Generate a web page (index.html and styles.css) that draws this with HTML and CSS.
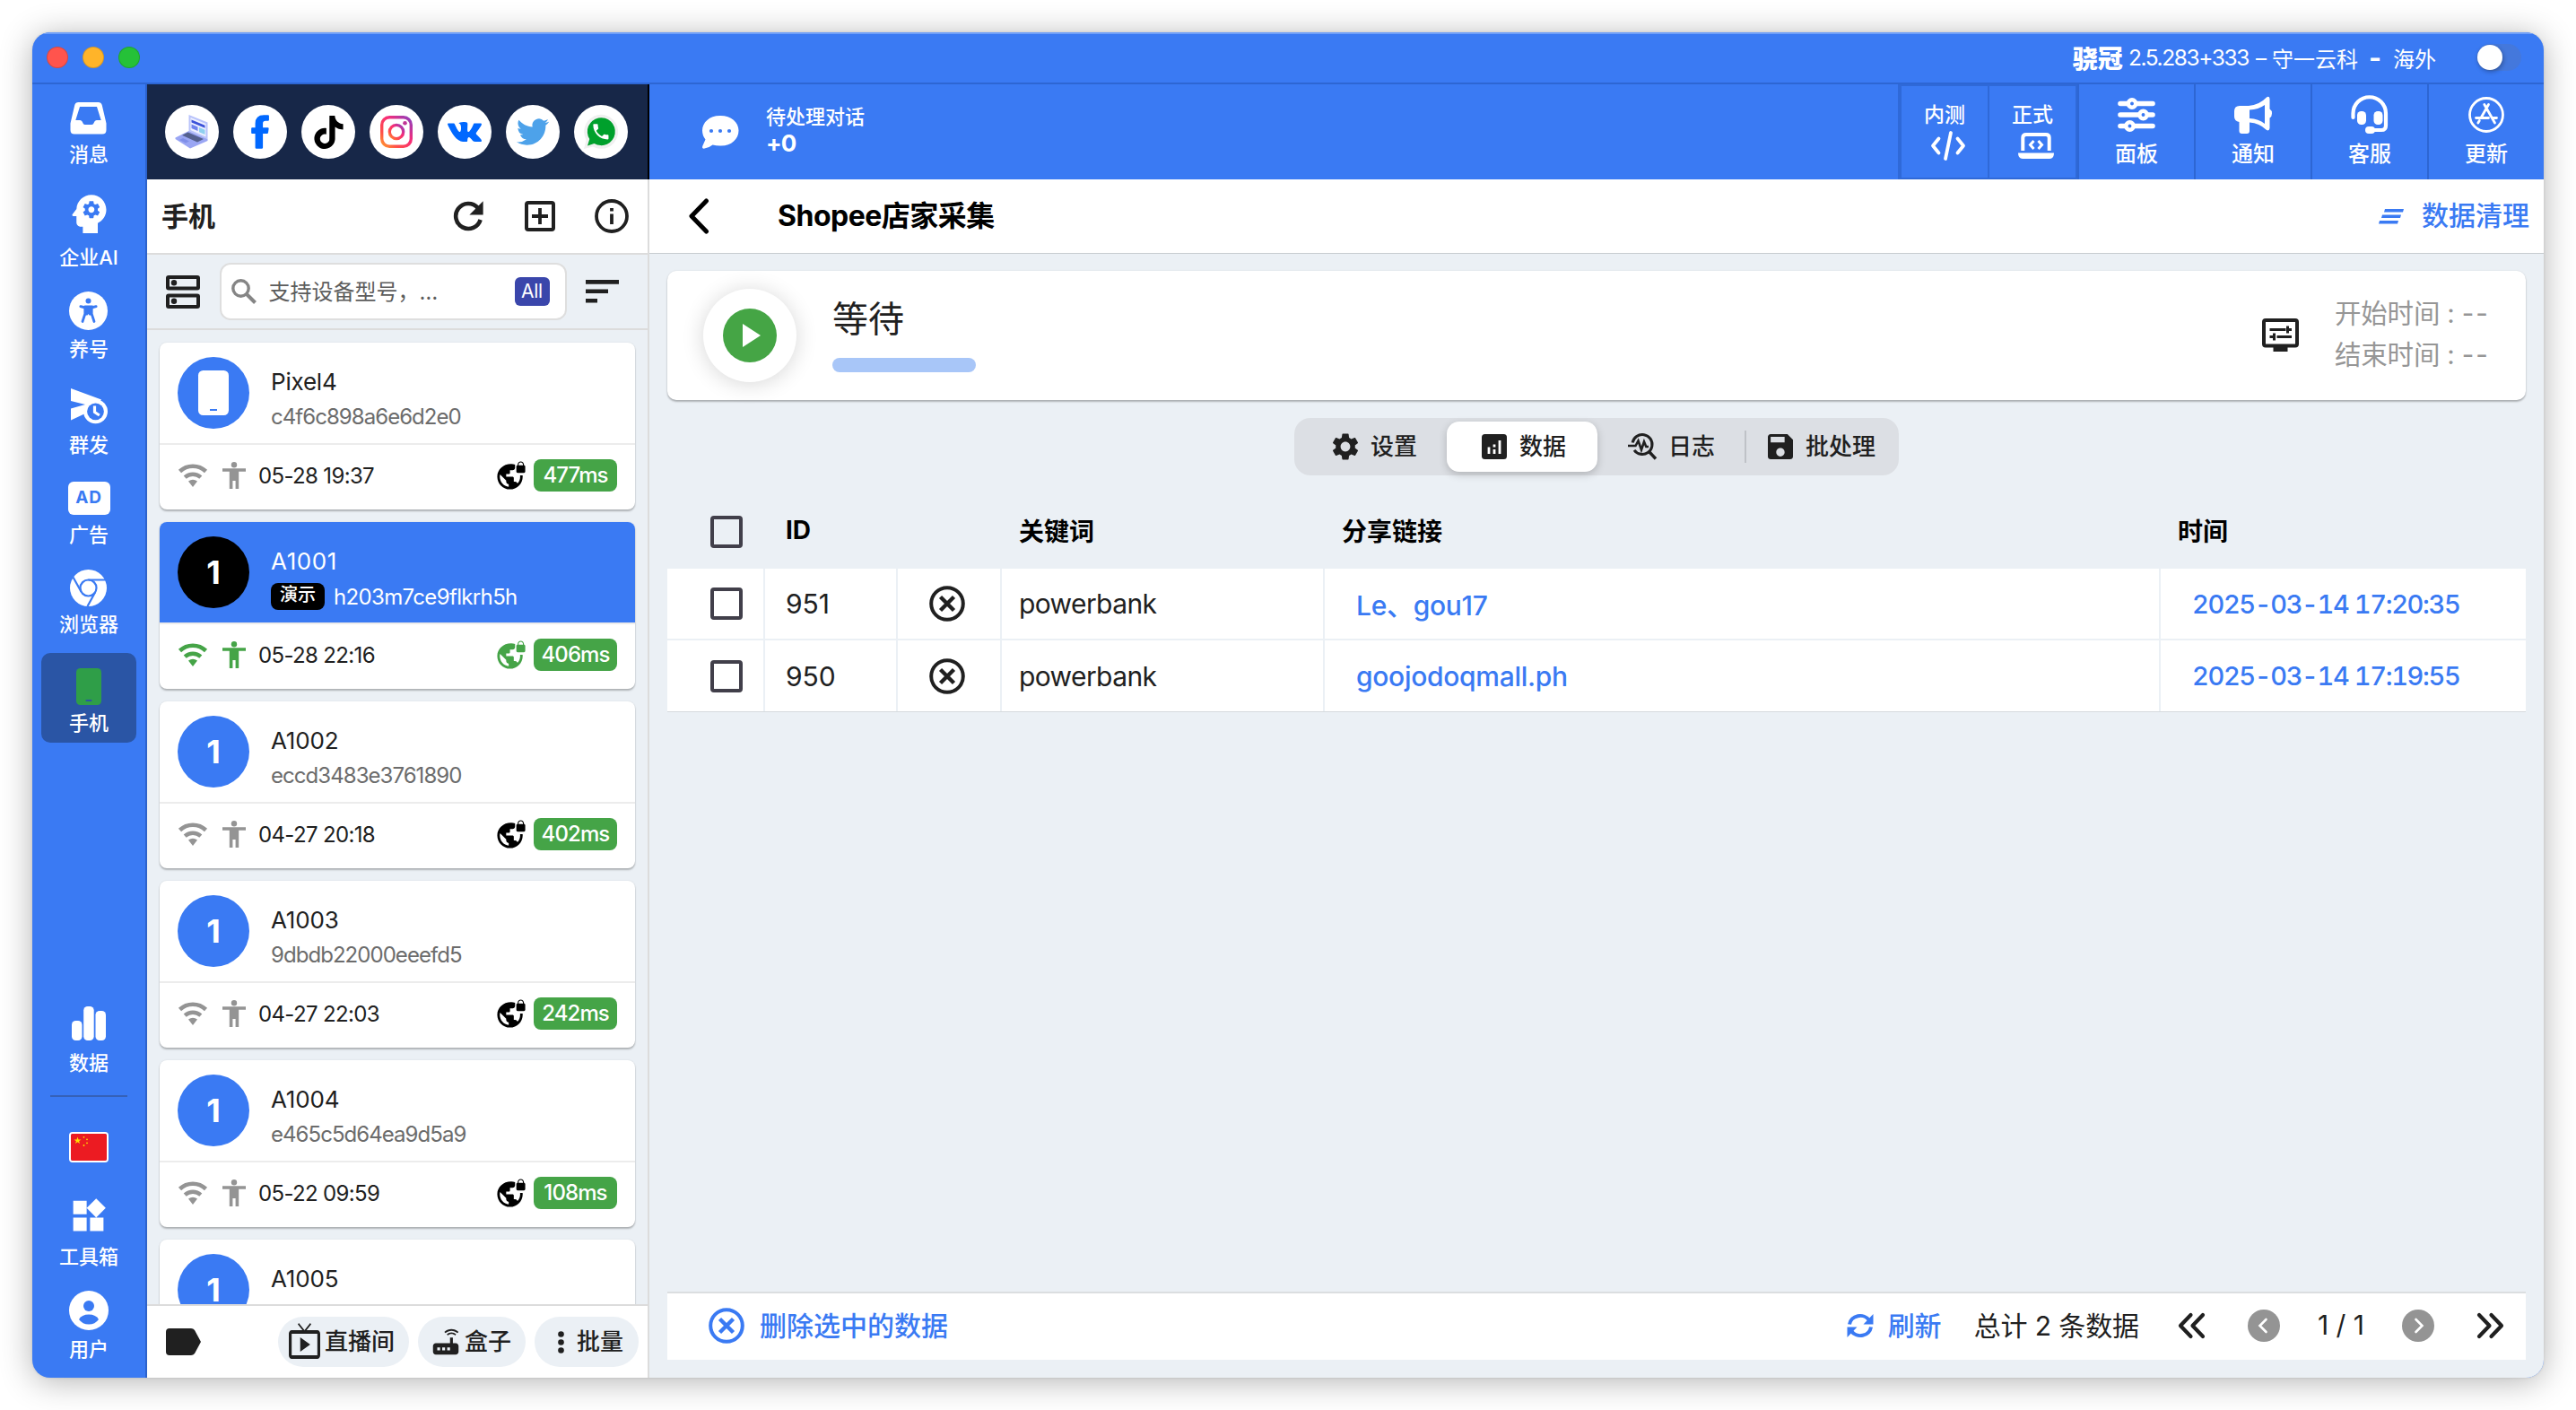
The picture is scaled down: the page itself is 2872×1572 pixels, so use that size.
FILE: index.html
```html
<!DOCTYPE html>
<html lang="zh-CN">
<head>
<meta charset="utf-8">
<title>骁冠</title>
<link rel="stylesheet" href="styles.css">
</head>
<body>
<svg class="defs" width="0" height="0">
  <defs>
    <symbol id="wifi" viewBox="0 0 34 30"><path d="M2.5 10.5a21 21 0 0 1 29 0" fill="none" stroke="currentColor" stroke-width="4.6"/><path d="M8.2 17.2a13 13 0 0 1 17.6 0" fill="none" stroke="currentColor" stroke-width="4.4"/><path d="M12 21.5q5-3.4 10 0L17 28z" fill="currentColor"/></symbol>
    <symbol id="man" viewBox="0 0 28 30"><circle cx="14" cy="3.2" r="3.2" fill="currentColor"/><path d="M1 7.200h26v3.600h-7.800V30h-3.600v-9h-3.200v9H8.800V10.800H1z" fill="currentColor"/></symbol>
    <symbol id="globe" viewBox="0 0 24 24"><path fill="currentColor" d="M22 4v-.5C22 2.120 20.880 1 19.500 1S17 2.120 17 3.500V4c-.55 0-1 .45-1 1v4c0 .55.45 1 1 1h5c.55 0 1-.45 1-1V5c0-.55-.45-1-1-1zm-.8 0h-3.400v-.5c0-.94.76-1.700 1.700-1.700s1.700.76 1.700 1.700V4zm-2.280 8c.04.33.08.66.08 1 0 2.080-.8 3.970-2.100 5.390-.26-.81-1-1.390-1.900-1.390h-1v-3c0-.55-.45-1-1-1H8v-2h2c.55 0 1-.45 1-1V8h2c1.100 0 2-.9 2-2V3.460c-.95-.3-1.950-.46-3-.46C5.480 3 1 7.480 1 13s4.480 10 10 10 10-4.480 10-10c0-.34-.02-.67-.05-1h-2.030zM10 20.930c-3.950-.49-7-3.850-7-7.930 0-.62.08-1.210.21-1.790L8 16v1c0 1.100.9 2 2 2v1.930z"/></symbol>
    <symbol id="xcircle" viewBox="0 0 40 40"><circle cx="20" cy="20" r="17.800" fill="none" stroke="currentColor" stroke-width="4"/><path d="M12.500 12.500l15 15m0-15l-15 15" stroke="currentColor" stroke-width="4.400" fill="none"/></symbol>
    <linearGradient id="ig" x1="0" y1="1" x2="1" y2="0"><stop offset="0" stop-color="#ff9a2e"/><stop offset=".25" stop-color="#ff4f4a"/><stop offset=".6" stop-color="#f72c78"/><stop offset="1" stop-color="#8a3fc0"/></linearGradient>
  </defs>
</svg>

<div class="window">
  <header class="titlebar">
    <div class="lights"><i class="red"></i><i class="yellow"></i><i class="green"></i></div>
    <div class="caption"><b>骁冠</b><span class="version">2.5.283+333</span><span class="dash">–</span><span>守一云科</span><b class="minus">-</b><span>海外</span></div>
    <div class="toggle"><i></i></div>
  </header>

  <div class="body">
    <nav class="sidebar">
      <a class="nav n1"><span class="ic"><svg width="41" height="37" viewBox="0 0 41 37"><path fill="#fff" fill-rule="evenodd" d="M9.500 1h22c2.200 0 3.600 1 4.200 3l4.800 20.500V32q0 4.500-4.500 4.500H5Q.5 36.500.5 32v-7.500L5.300 4C5.900 2 7.300 1 9.500 1zM11 6L6.300 21h5q1.500 0 2.300 1.600l1 2q.8 1.500 2.400 1.500h7q1.600 0 2.400-1.500l1-2Q28.200 21 29.700 21h5L30 6z"/></svg></span><em>消息</em></a>
      <a class="nav n2"><span class="ic"><svg width="57" height="57" viewBox="0 0 24 24"><path fill="#fff" d="M13 8.570c-.79 0-1.430.64-1.430 1.430s.64 1.430 1.430 1.430 1.430-.64 1.430-1.430-.64-1.430-1.430-1.430zM13 3C9.250 3 6.200 5.940 6.020 9.640L4.100 12.200c-.25.33-.01.8.4.8H6v3c0 1.100.9 2 2 2h1v3h7v-4.680c2.360-1.120 4-3.530 4-6.320 0-3.870-3.130-7-7-7zm3 7c0 .13-.01.26-.02.39l.83.66c.08.06.1.16.05.25l-.8 1.390c-.05.09-.16.12-.24.09l-.99-.4c-.21.16-.43.29-.67.39L14 13.830c-.01.1-.1.17-.2.17h-1.600c-.1 0-.18-.07-.2-.17l-.15-1.060c-.25-.1-.47-.23-.68-.39l-.99.4c-.09.03-.2 0-.25-.09l-.8-1.390c-.05-.08-.03-.19.05-.25l.84-.66c-.01-.13-.02-.26-.02-.39s.02-.27.04-.39l-.85-.66c-.08-.06-.1-.16-.05-.26l.8-1.380c.05-.09.15-.12.24-.09l1 .4c.2-.15.43-.29.67-.39L12 6.170c.02-.1.1-.17.2-.17h1.600c.1 0 .18.07.2.17l.15 1.060c.24.1.46.23.67.39l1-.4c.09-.03.2 0 .24.09l.8 1.380c.05.09.03.2-.05.26l-.85.66c.03.12.04.25.04.39z"/></svg></span><em>企业AI</em></a>
      <a class="nav n3"><span class="ic"><svg width="43" height="43" viewBox="0 0 43 43"><circle cx="21.500" cy="21.500" r="21.500" fill="#fff"/><circle cx="21.500" cy="10.500" r="3" fill="#3a7af3"/><path d="M12.800 16.600q8.700 3 17.400 0" stroke="#3a7af3" stroke-width="2.800" stroke-linecap="round" fill="none"/><path d="M17.800 17h7.400v8l2.800 8.500M17.800 17v8L15 33.500" stroke="#3a7af3" stroke-width="2.800" stroke-linecap="round" fill="none"/><path d="M17 17h9v9.500h-3.500l-1-1.500-1 1.500H17z" fill="#3a7af3"/></svg></span><em>养号</em></a>
      <a class="nav n4"><span class="ic"><svg width="42" height="40" viewBox="0 0 42 40"><path fill="#fff" d="M1 0l34 12.500-8 12-11 4L1 35.500v-13L17 18 1 14z"/><circle cx="28.500" cy="25.800" r="13.500" fill="#fff"/><circle cx="28.500" cy="25.800" r="9.400" fill="#3a7af3"/><path d="M27.500 19.500v7l5.300 3.500" stroke="#fff" stroke-width="3.200" fill="none"/></svg></span><em>群发</em></a>
      <a class="nav n5"><span class="ic"><span class="ad">AD</span></span><em>广告</em></a>
      <a class="nav n6"><span class="ic"><svg width="41" height="41" viewBox="0 0 41 41"><circle cx="20.500" cy="20.500" r="20.500" fill="#fff"/><g fill="none" stroke="#3a7af3" stroke-width="2.200"><circle cx="20.500" cy="20.500" r="9"/><path d="M20.500 11.500H40M12.700 25L3.500 8.500M28.300 25L19.500 41"/></g></svg></span><em>浏览器</em></a>
      <a class="nav n7 active"><span class="ic"><svg width="28" height="41" viewBox="0 0 28 41"><rect width="28" height="41" rx="4.500" fill="#2f9e48"/><rect x="10.500" y="35" width="7" height="2" rx="1" fill="#2a55a5"/></svg></span><em>手机</em></a>
      <a class="nav n8"><span class="ic"><svg width="38" height="38" viewBox="0 0 38 38" fill="#fff"><rect y="16" width="11.500" height="22" rx="4.500"/><rect x="13.200" width="11.500" height="38" rx="4.500"/><rect x="26.500" y="5" width="11.500" height="33" rx="4.500"/></svg></span><em>数据</em></a>
      <hr>
      <a class="flag"><svg width="40" height="30" viewBox="0 0 40 30"><rect width="40" height="30" fill="#ec1b22"/><g fill="#ffe000"><path d="M7.500 3.500l1 2.900h3l-2.400 1.800.9 2.900-2.500-1.800-2.500 1.800.9-2.900-2.400-1.800h3z"/><circle cx="14.500" cy="3.800" r=".9"/><circle cx="18" cy="6.300" r=".9"/><circle cx="18" cy="10.300" r=".9"/><circle cx="14.500" cy="13" r=".9"/></g></svg></a>
      <a class="nav n9"><span class="ic"><svg width="45" height="45" viewBox="0 0 24 24"><path fill="#fff" d="M13 13v8h8v-8h-8zM3 21h8v-8H3v8zM3 3v8h8V3H3zm13.660-1.310L11 7.340 16.660 13l5.660-5.660-5.660-5.650z"/></svg></span><em>工具箱</em></a>
      <a class="nav n10"><span class="ic"><svg width="44" height="44" viewBox="0 0 44 44"><circle cx="22" cy="22" r="22" fill="#fff"/><circle cx="22" cy="17" r="6" fill="#3a7af3"/><path d="M11 32q3-5.500 11-5.500T33 32q-4 5.500-11 5.500T11 32z" fill="#3a7af3"/></svg></span><em>用户</em></a>
    </nav>

    <section class="devices">
      <div class="social">
        <i><svg width="40" height="40" viewBox="0 0 40 40"><path d="M16.500 1l21 8.500V28l-21-9z" fill="#b9c3fb"/><path d="M18.500 4l17 7v14.500l-17-7.500z" fill="#eef1ff"/><path d="M19.500 6.500l15 6.200v3l-15-6.200z" fill="#3b52d9"/><path d="M19.500 11.500l7 3v4.500l-7-3z" fill="#6f83ee"/><path d="M28 15l6.500 2.800V23L28 20.200z" fill="#8fd0f0"/><path d="M16.500 19l21 9v2L18 38.500 1.500 28v-1.500z" fill="#9aa6f4"/><path d="M15.500 20.500L33 28l-7 3.500L9 23.800z" fill="#54608e"/><path d="M10 27l7 3.500-4 2L6 29z" fill="#7f8ee8"/></svg></i>
        <i><svg width="20" height="38" viewBox="22 4 258 508" preserveAspectRatio="none"><path fill="#0068ff" d="M279 18v62q0 14-14 14h-36q-38 0-38 36v66h70q16 0 14 14l-8 62q-2 14-16 14h-60v206q0 18-18 18H99q-18 0-18-18V286H36q-12 0-12-14v-62q0-14 12-14h45v-62Q81 6 205 6h60q14 0 14 12z"/></svg></i>
        <i><svg width="37" height="37" viewBox="0 0 24 24"><path d="M12.525.02c1.310-.02 2.610-.01 3.910-.02.08 1.530.63 3.090 1.750 4.170 1.120 1.110 2.700 1.620 4.240 1.790v4.030c-1.440-.05-2.890-.35-4.200-.97-.57-.26-1.100-.59-1.620-.93-.01 2.920.01 5.840-.02 8.750-.08 1.400-.54 2.790-1.350 3.940-1.310 1.920-3.580 3.170-5.910 3.210-1.430.08-2.860-.31-4.080-1.030-2.020-1.190-3.440-3.370-3.650-5.710-.02-.5-.03-1-.01-1.490.18-1.900 1.120-3.720 2.580-4.960 1.660-1.440 3.980-2.130 6.150-1.720.02 1.480-.04 2.960-.04 4.440-.99-.32-2.150-.23-3.020.37-.63.41-1.110 1.040-1.360 1.750-.21.51-.15 1.070-.14 1.610.24 1.640 1.820 3.020 3.500 2.870 1.120-.01 2.190-.66 2.770-1.610.19-.33.4-.67.41-1.060.1-1.790.06-3.570.07-5.360.01-4.030-.01-8.050.02-12.070z"/></svg></i>
        <i><svg width="36" height="36" viewBox="0 0 36 36"><g fill="none" stroke="url(#ig)"><rect x="1.700" y="1.700" width="32.600" height="32.600" rx="8.500" stroke-width="3.400"/><circle cx="18" cy="18" r="7.700" stroke-width="3.300"/></g><circle cx="27.500" cy="8.300" r="2.300" fill="#c03596"/></svg></i>
        <i><svg width="38" height="38" viewBox="0 0 24 24"><path fill="#0068ff" d="M13.162 18.994c.609 0 .858-.406.851-.915-.031-1.917.714-2.949 2.059-1.604 1.488 1.488 1.796 2.519 3.603 2.519h3.200c.808 0 1.126-.26 1.126-.668 0-.863-1.421-2.386-2.625-3.504-1.686-1.565-1.765-1.602-.313-3.486 1.801-2.339 4.157-5.336 2.073-5.336h-3.981c-.772 0-.828.435-1.103 1.083-.995 2.347-2.886 5.387-3.604 4.922-.751-.485-.407-2.406-.35-5.261.015-.754.011-1.271-1.141-1.539-.629-.145-1.241-.205-1.809-.205-2.273 0-3.841.953-2.950 1.119 1.571.293 1.420 3.692 1.054 5.160-.638 2.556-3.036-2.024-4.035-4.305-.241-.548-.315-.974-1.175-.974H.787C.295 6 0 6.160 0 6.516c0 .602 2.960 6.720 5.786 9.770 2.756 2.975 5.480 2.708 7.376 2.708z"/></svg></i>
        <i><svg width="36" height="36" viewBox="0 0 24 24"><path fill="#4da2ea" d="M23.953 4.570a10 10 0 01-2.825.775 4.958 4.958 0 002.163-2.723c-.951.555-2.005.959-3.127 1.184a4.920 4.920 0 00-8.384 4.482C7.690 8.095 4.067 6.130 1.640 3.162a4.822 4.822 0 00-.666 2.475c0 1.710.87 3.213 2.188 4.096a4.904 4.904 0 01-2.228-.616v.06a4.923 4.923 0 003.946 4.827 4.996 4.996 0 01-2.212.085 4.936 4.936 0 004.604 3.417 9.867 9.867 0 01-6.102 2.105c-.39 0-.779-.023-1.170-.067a13.995 13.995 0 007.557 2.209c9.053 0 13.998-7.496 13.998-13.985 0-.21 0-.42-.015-.63A9.935 9.935 0 0024 4.590z"/></svg></i>
        <i><svg width="38" height="38" viewBox="0 0 38 38"><path d="M0 38l2.500-10A19 19 0 1 1 10 35.500z" fill="#f0f0f0"/><path d="M4 34.500L6.300 27A15.500 15.500 0 1 1 11.500 32z" fill="#00a02c"/><path d="M6.620 10.790c1.440 2.830 3.760 5.140 6.590 6.590l2.200-2.200c.27-.27.67-.36 1.020-.24 1.120.37 2.330.57 3.570.57.55 0 1 .45 1 1V20c0 .55-.45 1-1 1-9.390 0-17-7.610-17-17 0-.55.45-1 1-1h3.500c.55 0 1 .45 1 1 0 1.250.2 2.450.57 3.570.11.35.03.74-.25 1.020l-2.200 2.200z" fill="#fff" transform="translate(7.500 7.500) scale(.95)"/></svg></i>
      </div>

      <div class="panel-head">
        <h2>手机</h2>
        <svg width="48" height="48" viewBox="0 0 24 24"><path d="M17.300 7.300A7 7 0 1 0 18.800 14" fill="none" stroke="#202020" stroke-width="2.300"/><path d="M20.300 3.600v7.600h-7.600z" fill="#202020"/></svg>
        <svg width="34" height="34" viewBox="0 0 34 34"><rect x="2" y="2" width="30" height="30" rx="2" fill="none" stroke="#202020" stroke-width="4"/><path d="M17 8v18M8 17h18" stroke="#202020" stroke-width="3.800"/></svg>
        <svg width="38" height="38" viewBox="0 0 38 38"><circle cx="19" cy="19" r="17" fill="none" stroke="#202020" stroke-width="3.800"/><path d="M19 16.500V28M19 10v3.600" stroke="#202020" stroke-width="3.800"/></svg>
      </div>

      <div class="search-row">
        <svg width="38" height="37" viewBox="0 0 38 37"><g fill="none" stroke="#202020" stroke-width="4"><rect x="2" y="2" width="34" height="12.500" rx="1"/><rect x="2" y="22.500" width="34" height="12.500" rx="1"/></g><circle cx="9" cy="8.300" r="3.200" fill="#202020"/><circle cx="9" cy="28.700" r="3.200" fill="#202020"/></svg>
        <div class="search"><svg width="28" height="28" viewBox="0 0 28 28"><circle cx="10.500" cy="10.500" r="8.700" fill="none" stroke="#858585" stroke-width="3.400"/><path d="M16.500 16.500L26.500 26.500" stroke="#858585" stroke-width="4"/></svg><span>支持设备型号，…</span><b>All</b></div>
        <svg width="37" height="26" viewBox="0 0 37 26"><path d="M0 2.400h37M0 12.800h25M0 23.200h13" stroke="#202020" stroke-width="4.600"/></svg>
      </div>

      <div class="list">
        <article class="card">
          <div class="top"><div class="avatar"><svg width="34" height="50" viewBox="0 0 34 50"><rect width="34" height="50" rx="5.500" fill="#fff"/><rect x="13" y="43" width="8" height="2" fill="#3a7af3"/></svg></div><div class="who"><p>Pixel4</p><small>c4f6c898a6e6d2e0</small></div></div>
          <div class="foot"><svg class="wifi"><use href="#wifi"/></svg><svg class="man"><use href="#man"/></svg><time>05-28 19:37</time><svg class="globe"><use href="#globe"/></svg><b class="ms">477ms</b></div>
        </article>
        <article class="card selected">
          <div class="top"><div class="avatar">1</div><div class="who"><p>A1001</p><small><mark>演示</mark>h203m7ce9flkrh5h</small></div></div>
          <div class="foot"><svg class="wifi"><use href="#wifi"/></svg><svg class="man"><use href="#man"/></svg><time>05-28 22:16</time><svg class="globe"><use href="#globe"/></svg><b class="ms">406ms</b></div>
        </article>
        <article class="card">
          <div class="top"><div class="avatar">1</div><div class="who"><p>A1002</p><small>eccd3483e3761890</small></div></div>
          <div class="foot"><svg class="wifi"><use href="#wifi"/></svg><svg class="man"><use href="#man"/></svg><time>04-27 20:18</time><svg class="globe"><use href="#globe"/></svg><b class="ms">402ms</b></div>
        </article>
        <article class="card">
          <div class="top"><div class="avatar">1</div><div class="who"><p>A1003</p><small>9dbdb22000eeefd5</small></div></div>
          <div class="foot"><svg class="wifi"><use href="#wifi"/></svg><svg class="man"><use href="#man"/></svg><time>04-27 22:03</time><svg class="globe"><use href="#globe"/></svg><b class="ms">242ms</b></div>
        </article>
        <article class="card">
          <div class="top"><div class="avatar">1</div><div class="who"><p>A1004</p><small>e465c5d64ea9d5a9</small></div></div>
          <div class="foot"><svg class="wifi"><use href="#wifi"/></svg><svg class="man"><use href="#man"/></svg><time>05-22 09:59</time><svg class="globe"><use href="#globe"/></svg><b class="ms">108ms</b></div>
        </article>
        <article class="card">
          <div class="top"><div class="avatar">1</div><div class="who"><p>A1005</p></div></div>
        </article>
      </div>

      <div class="bulk">
        <svg width="39" height="30" viewBox="0 0 39 30"><path d="M4 0h24q2.500 0 4 2l7 13-7 13q-1.500 2-4 2H4q-4 0-4-4V4q0-4 4-4z" fill="#202020"/></svg>
        <button class="live"><svg width="35" height="33" viewBox="1 2 22 20" preserveAspectRatio="none"><path fill="#202020" d="M21 6h-7.590l3.290-3.290L16 2l-4 4-4-4-.7.71L10.590 6H3c-1.100 0-2 .89-2 2v12c0 1.100.9 2 2 2h18c1.100 0 2-.9 2-2V8c0-1.110-.9-2-2-2zm0 14H3V8h18v12zM9 10v8l7-4z"/></svg>直播间</button>
        <button class="box"><svg width="38" height="38" viewBox="0 0 24 24"><path fill="#202020" d="M20.200 5.900l.8-.8C19.600 3.700 17.800 3 16 3s-3.600.7-5 2.100l.8.8C13 4.800 14.500 4.200 16 4.200s3 .6 4.200 1.700zm-.9.8c-.9-.9-2.100-1.400-3.300-1.400s-2.400.5-3.300 1.400l.8.8c.7-.7 1.600-1 2.500-1 .9 0 1.800.3 2.500 1l.8-.8zM19 13h-2V9h-2v4H5c-1.100 0-2 .9-2 2v4c0 1.100.9 2 2 2h14c1.100 0 2-.9 2-2v-4c0-1.100-.9-2-2-2zM8 18H6v-2h2v2zm3.500 0h-2v-2h2v2zm3.500 0h-2v-2h2v2z"/></svg>盒子</button>
        <button class="batch"><svg width="7" height="25" viewBox="0 0 7 25" fill="#202020"><circle cx="3.500" cy="3.500" r="3.300"/><circle cx="3.500" cy="12.500" r="3.300"/><circle cx="3.500" cy="21.500" r="3.300"/></svg>批量</button>
      </div>
    </section>

    <main class="main">
      <div class="topbar">
        <svg width="42" height="37" viewBox="0 0 42 37"><path fill="#fff" d="M21.500 0h-1C9 0 1 7.500 1 16.500q0 5.500 3.500 10L1.200 34q-.8 3 2.300 2.600 5.500-1 9-4 4 1 8 1h1.500c11.500 0 19.500-7.500 19.500-17S33 0 21.500 0z"/><g fill="#3a7af3"><circle cx="11" cy="17" r="2.100"/><circle cx="21" cy="17" r="2.100"/><circle cx="31" cy="17" r="2.100"/></g></svg>
        <div class="pending"><span>待处理对话</span><b>+0</b></div>
        <div class="dev">
          <a><span>内测</span><svg width="38" height="33" viewBox="0 0 38 33"><path d="M8.500 8.500L2 16.500l6.500 8M29.500 8.500l6.500 8-6.500 8M22 2l-6 29" fill="none" stroke="#fff" stroke-width="3.800" stroke-linecap="round" stroke-linejoin="round"/></svg></a>
          <a><span>正式</span><svg width="40" height="29" viewBox="0 0 40 29"><path d="M5.300 20V5.500Q5.300 2 9 2h22q3.700 0 3.700 3.500V20" fill="none" stroke="#fff" stroke-width="4"/><path d="M0 22.500h40q0 6.500-5 6.500H5q-5 0-5-6.500z" fill="#fff"/><path d="M17.500 9l-4 4.500 4 4.500M22.500 9l4 4.500-4 4.500" fill="none" stroke="#fff" stroke-width="3"/></svg></a>
        </div>
        <a class="tool"><svg width="42" height="40" viewBox="0 0 42 40"><path d="M3 7.500h36M3 20h36M3 32.500h36" stroke="#fff" stroke-width="5.600" stroke-linecap="round"/><g fill="#3a7af3" stroke="#fff" stroke-width="4.500"><circle cx="16" cy="7.500" r="4.200"/><circle cx="28.500" cy="20" r="4.200"/><circle cx="13.500" cy="32.500" r="4.200"/></g></svg><span>面板</span></a>
        <a class="tool"><svg width="42" height="42" viewBox="0 0 42 42"><path fill="#fff" fill-rule="evenodd" d="M6 11h10Q28 10 36 1.500q3-2 3.500 1.500v11.500q2.500 1.500 2.500 5t-2.500 5V36q-.5 3.500-3.500 2Q28 30 17 29.500V39q0 3-3 3H8.500q-3 0-3-3V29Q0 28 0 23v-6q0-6 6-6zM17 15.500v9.500q10 .5 17 6V10q-7 5-17 5.500z"/></svg><span>通知</span></a>
        <a class="tool"><svg width="42" height="42" viewBox="0 0 42 42"><path d="M2.500 24V19.500a18.200 18.200 0 0 1 36.500 0V33q0 5-5 5H22" fill="none" stroke="#fff" stroke-width="4.200" stroke-linecap="round"/><rect x="7" y="17" width="10" height="15" rx="4.500" fill="#fff"/><rect x="25.500" y="17" width="10" height="15" rx="4.500" fill="#fff"/><rect x="16" y="34" width="11" height="8" rx="4" fill="#fff"/></svg><span>客服</span></a>
        <a class="tool"><svg width="40" height="40" viewBox="0 0 40 40"><circle cx="20" cy="20" r="18.500" fill="none" stroke="#fff" stroke-width="2.800"/><path d="M22.500 8.500L14 23.500M17.800 8.500L29.500 29M8.500 23.500h14M27 23.500h4.500M12.300 26.500L10.800 29" fill="none" stroke="#fff" stroke-width="2.800" stroke-linecap="round"/></svg><span>更新</span></a>
      </div>

      <div class="page-head">
        <svg width="24" height="40" viewBox="0 0 24 40"><path d="M20.500 3L4 20l16.500 17" fill="none" stroke="#000" stroke-width="5" stroke-linecap="round" stroke-linejoin="round"/></svg>
        <h1>Shopee店家采集</h1>
        <a><svg width="28" height="17" viewBox="0 0 28 17"><path d="M7 0h21l-1 3.500H6zM4 6.500h21l-1 3.500H3zM1 13h21l-1 3.500H0z" fill="#3a7af3"/></svg>数据清理</a>
      </div>

      <div class="content">
        <section class="status">
          <div class="play"><i><svg width="20" height="26" viewBox="0 0 20 26"><path d="M0 0l20 13L0 26z" fill="#fff"/></svg></i></div>
          <div class="state"><h3>等待</h3><div class="bar"></div></div>
          <svg class="monitor" width="41" height="37" viewBox="0 0 41 37"><rect x="2" y="2" width="37" height="28.500" rx="2" fill="none" stroke="#202020" stroke-width="4"/><path d="M12.500 31h16v6h-16z" fill="#202020"/><path d="M8.500 12.500h18M28.500 8.500v8M30 12.500h3M16.500 20.500H33M13.500 16.500v8M8.500 20.500h4" stroke="#202020" stroke-width="3"/></svg>
          <div class="times"><p>开始时间 : <span>--</span></p><p>结束时间 : <span>--</span></p></div>
        </section>

        <div class="tabs">
          <a class="t1"><svg width="36" height="36" viewBox="0 0 24 24"><path fill="#202020" d="M19.140 12.940c.04-.3.06-.61.06-.94 0-.32-.02-.64-.07-.94l2.030-1.580c.18-.14.23-.41.12-.61l-1.920-3.320c-.12-.22-.37-.29-.59-.22l-2.390.96c-.5-.38-1.030-.7-1.620-.94l-.36-2.540c-.04-.24-.24-.41-.48-.41h-3.840c-.24 0-.43.17-.47.41l-.36 2.540c-.59.24-1.130.57-1.620.94l-2.390-.96c-.22-.08-.47 0-.59.22L2.740 8.870c-.12.21-.08.47.12.61l2.030 1.580c-.05.3-.09.63-.09.94s.02.64.07.94l-2.030 1.580c-.18.14-.23.41-.12.61l1.920 3.320c.12.22.37.29.59.22l2.390-.96c.5.38 1.030.7 1.620.94l.36 2.540c.05.24.24.41.48.41h3.840c.24 0 .44-.17.47-.41l.36-2.540c.59-.24 1.130-.56 1.620-.94l2.390.96c.22.08.47 0 .59-.22l1.920-3.320c.12-.22.07-.47-.12-.61l-2.010-1.580zM12 15.600c-1.980 0-3.600-1.620-3.600-3.600s1.620-3.600 3.600-3.600 3.600 1.620 3.600 3.600-1.620 3.600-3.600 3.600z"/></svg>设置</a>
          <a class="t2"><svg width="28" height="28" viewBox="0 0 28 28"><rect width="28" height="28" rx="3.500" fill="#202020"/><path d="M8 14.500V22M14 17v5M20 7v15M14 11.500v3" stroke="#fff" stroke-width="2.800"/></svg>数据</a>
          <a class="t3"><svg width="32" height="30" viewBox="0 0 32 30"><circle cx="16" cy="12.500" r="11" fill="none" stroke="#202020" stroke-width="3" stroke-dasharray="60 9.100" transform="rotate(190 16 12.500)"/><path d="M0 14h8.500l3-5.500 3.500 10 3-9 2.300 5.500H23" fill="none" stroke="#202020" stroke-width="2.600"/><path d="M23.500 20.500L31 28.500" stroke="#202020" stroke-width="3.400"/></svg>日志</a>
          <hr>
          <a class="t4"><svg width="28" height="28" viewBox="3 3 18 18"><path fill="#202020" d="M17 3H5c-1.110 0-2 .9-2 2v14c0 1.100.89 2 2 2h14c1.100 0 2-.9 2-2V7l-4-4zm-5 16c-1.660 0-3-1.340-3-3s1.340-3 3-3 3 1.340 3 3-1.340 3-3 3zm3-10H5V5h10v4z"/></svg>批处理</a>
        </div>

        <div class="table">
          <div class="row head"><div class="c-check"><i class="check"></i></div><div>ID</div><div></div><div>关键词</div><div>分享链接</div><div>时间</div></div>
          <div class="row"><div class="c-check"><i class="check"></i></div><div>951</div><div class="c-x"><svg width="40" height="40"><use href="#xcircle"/></svg></div><div class="word">powerbank</div><div class="link">Le、gou17</div><div class="link date">2025-03-14 17:20:35</div></div>
          <div class="row"><div class="c-check"><i class="check"></i></div><div>950</div><div class="c-x"><svg width="40" height="40"><use href="#xcircle"/></svg></div><div class="word">powerbank</div><div class="link">goojodoqmall.ph</div><div class="link date">2025-03-14 17:19:55</div></div>
        </div>

        <footer class="pager">
          <a class="del"><svg width="40" height="40"><use href="#xcircle"/></svg>删除选中的数据</a>
          <a class="reload"><svg width="30" height="28" viewBox="0 0 30 28"><g fill="none" stroke="#3a7af3" stroke-width="4"><path d="M3 12.500A12 11 0 0 1 25 8"/><path d="M27 15.500A12 11 0 0 1 5 20"/></g><path d="M29.500 1v11.500H18.500z" fill="#3a7af3"/><path d="M.5 27V15.500h11z" fill="#3a7af3"/></svg>刷新</a>
          <span class="total">总计 2 条数据</span>
          <svg class="first" width="31" height="28" viewBox="0 0 31 28"><path d="M14.500 2L3 14l11.500 12M28 2L16.500 14 28 26" fill="none" stroke="#202020" stroke-width="4.200" stroke-linecap="round" stroke-linejoin="round"/></svg>
          <svg class="prev" width="36" height="36" viewBox="0 0 36 36"><circle cx="18" cy="18" r="18" fill="#949494"/><path d="M20.500 11L13.500 18l7 7" fill="none" stroke="#fff" stroke-width="2.600" stroke-linecap="round"/></svg>
          <span class="page">1 / 1</span>
          <svg class="next" width="36" height="36" viewBox="0 0 36 36"><circle cx="18" cy="18" r="18" fill="#949494"/><path d="M15.500 11l7 7-7 7" fill="none" stroke="#fff" stroke-width="2.600" stroke-linecap="round"/></svg>
          <svg class="last" width="31" height="28" viewBox="0 0 31 28"><path d="M16.500 2L28 14 16.500 26M3 2l11.500 12L3 26" fill="none" stroke="#202020" stroke-width="4.200" stroke-linecap="round" stroke-linejoin="round"/></svg>
        </footer>
      </div>
    </main>
  </div>
</div>
</body>
</html>
```
FILE: styles.css
```css
* { box-sizing: border-box; margin: 0; padding: 0; }
body { width: 2872px; height: 1572px; padding: 36px; overflow: hidden; background: #fff; color: #202020; font-family: Inter, "Noto Sans CJK SC", sans-serif; }
svg { display: block; flex: none; overflow: visible; }
.defs { position: absolute; }
em, i { font-style: normal; }
hr { border: 0; flex: none; }
a, span, b, time, p, small { white-space: nowrap; }

.window { width: 2800px; height: 1500px; border-radius: 20px; overflow: hidden; background: #3a7af3; display: flex; flex-direction: column; box-shadow: 0 0 3px rgba(0,0,0,.12), 0 4px 36px rgba(0,0,0,.3); }

.titlebar { height: 58px; flex: none; display: flex; align-items: center; padding: 0 25px 0 16px; border-bottom: 2px solid #2d66d3; box-shadow: inset 0 2px 0 #6f9ff8; color: #fff; }
.lights { display: flex; gap: 16px; flex: 1; }
.lights i { width: 24px; height: 24px; border-radius: 50%; border: 1px solid rgba(0,0,0,.15); }
.red { background: #ff544d; } .yellow { background: #ffb429; } .green { background: #25c138; }
.caption { display: flex; align-items: center; font-size: 24px; }
.caption b { font-size: 28px; font-weight: 900; }
.caption .version { margin-left: 6px; letter-spacing: -1.400px; font-size: 24.500px; }
.caption .dash { margin: 0 6px 0 8px; width: 12px; overflow: visible; }
.caption .minus { width: 15px; margin: 0 12px 0 12px; font-weight: 700; font-size: 30px; }
.toggle { width: 50px; height: 30px; border-radius: 15px; background: #4478dc; margin-left: 45px; padding: 1px; }
.toggle i { display: block; width: 28px; height: 28px; border-radius: 50%; background: #fff; box-shadow: 1px 2px 5px rgba(0,0,0,.3); }

.body { flex: 1; min-height: 0; display: flex; }

.sidebar { width: 128px; flex: none; border-right: 2px solid #2c62cc; padding: 17px 0 18px; display: flex; flex-direction: column; align-items: center; color: #fff; }
.nav { display: flex; flex-direction: column; align-items: center; justify-content: space-between; height: 75px; flex: none; }
.nav .ic { height: 40px; display: flex; align-items: center; justify-content: center; }
.nav em { font-size: 22px; line-height: 28px; font-weight: 500; }
.n2 { height: 83px; margin-top: 32px; }
.n3 { height: 77px; margin-top: 25px; }
.n4 { height: 77px; margin-top: 30px; }
.n5, .n6 { margin-top: 25px; }
.n7 { width: 106px; height: 100px; margin-top: 18px; padding: 17px 0 8px; border-radius: 10px; background: #2a55a5; }
.n8 { height: 78px; margin-top: auto; }
.n9 { height: 80px; margin-top: 39px; }
.n10 { height: 77px; margin-top: 26px; }
.sidebar hr { width: 86px; height: 2px; margin-top: 22px; background: #3561b8; }
.flag { margin-top: 39px; border: 2px solid #fff; border-radius: 4px; overflow: hidden; }
.ad { width: 47px; height: 37px; border-radius: 6px; background: #fff; color: #3a7af3; font-size: 19px; letter-spacing: .8px; font-weight: 700; line-height: 36px; text-align: center; }

.devices { width: 560px; flex: none; border-right: 2px solid #dcdcdc; background: #ebf0f5; display: flex; flex-direction: column; }
.social { height: 106px; width: 560px; flex: none; background: #172748; border-right: 2px solid #000; display: flex; align-items: center; gap: 16px; padding-left: 20px; position: relative; }
.social i { width: 60px; height: 60px; border-radius: 50%; background: #fff; display: flex; align-items: center; justify-content: center; flex: none; }
.panel-head { height: 84px; flex: none; background: #fff; border-bottom: 2px solid #dcdcdc; display: flex; align-items: center; padding: 0 21px 0 16px; }
.panel-head h2 { flex: 1; font-size: 30px; font-weight: 700; padding-bottom: 5px; }
.panel-head svg + svg { margin-left: 39px; }
.panel-head svg:last-child { margin-left: 44px; }
.search-row { height: 84px; flex: none; border-bottom: 2px solid #dcdcdc; display: flex; align-items: center; padding: 0 32px 0 21px; justify-content: space-between; }
.search { width: 387px; height: 64px; border: 2px solid #dedede; border-radius: 12px; background: #fff; display: flex; align-items: center; padding: 0 17px 0 11px; font-size: 24px; color: #5c5c5c; }
.search span { flex: 1; margin-left: 14px; padding-bottom: 3px; }
.search b { width: 39px; height: 32px; border-radius: 6px; background: #3a46ab; color: #fff; font-size: 21px; font-weight: 400; line-height: 32px; text-align: center; letter-spacing: -.3px; }

.list { flex: 1; min-height: 0; overflow: hidden; padding: 14px 14px 0; display: flex; flex-direction: column; gap: 14px; }
.card { height: 186px; flex: none; border-radius: 8px; background: #fff; box-shadow: 0 2px 2px rgba(0,0,0,.25), 0 0 2px rgba(0,0,0,.1); overflow: hidden; }
.top { height: 114px; border-bottom: 2px solid #ececec; display: flex; padding: 16px 20px; }
.avatar { width: 80px; height: 80px; border-radius: 50%; background: #3a7af3; color: #fff; display: flex; align-items: center; justify-content: center; font-size: 36px; font-weight: 700; flex: none; }
.who { margin-left: 24px; padding-top: 9px; }
.who p { font-size: 26px; line-height: 38px; letter-spacing: -.2px; }
.who small { font-size: 24px; color: #6c6c6c; display: flex; align-items: center; height: 38px; letter-spacing: -.95px; }
mark { height: 30px; width: 60px; border-radius: 8px; background: #000; color: #fff; font-size: 20px; line-height: 27px; text-align: center; margin-right: 10px; font-weight: 500; letter-spacing: 0; }
.foot { height: 72px; display: flex; align-items: center; padding: 0 20px 4px; font-size: 24px; letter-spacing: -.65px; }
.wifi { width: 34px; height: 30px; color: #949494; }
.man { width: 28px; height: 30px; margin-left: 15px; color: #949494; }
.foot time { flex: 1; margin-left: 13px; }
.globe { width: 34px; height: 34px; margin-right: 8px; color: #000; }
.ms { width: 93px; height: 36px; border-radius: 8px; background: #45a447; color: #fff; font-weight: 500; line-height: 36px; text-align: center; letter-spacing: -.9px; }
.selected .top { background: #3a7af3; }
.selected .avatar { background: #000; }
.selected .who p { letter-spacing: .6px; }
.selected .who p, .selected .who small { color: #fff; }
.selected .who small { letter-spacing: -.65px; height: 40px; }
.selected .wifi, .selected .man, .selected .globe { color: #45a447; }

.bulk { height: 82px; flex: none; border-top: 2px solid #dcdcdc; background: #fff; display: flex; align-items: center; padding: 0 10px 0 21px; gap: 10px; }
.bulk > svg { margin-right: auto; }
.bulk button { height: 56px; border: 0; border-radius: 28px; background: #ebf0f5; font: 500 26px/56px Inter, "Noto Sans CJK SC", sans-serif; color: #202020; display: flex; align-items: center; }
.bulk .live { width: 146px; padding-left: 12px; gap: 5px; }
.bulk .live svg { height: 40px; margin-bottom: 2px; }
.bulk .box { width: 120px; padding-left: 12px; gap: 2px; }
.bulk .batch { width: 116px; padding-left: 26px; gap: 14px; }

.main { flex: 1; min-width: 0; display: flex; flex-direction: column; }
.topbar { height: 106px; flex: none; background: #3a7af3; color: #fff; display: flex; align-items: center; padding-left: 58px; }
.pending { margin-left: 30px; flex: 1; display: flex; flex-direction: column; font-size: 22px; line-height: 29px; font-weight: 500; padding-bottom: 5px; }
.pending b { font-size: 26px; font-weight: 700; letter-spacing: -1px; }
.dev { width: 200px; height: 106px; border: 2px solid #2f69d8; border-left-width: 4px; display: flex; font-size: 23px; font-weight: 500; }
.dev a { flex: 1; display: flex; flex-direction: column; align-items: center; padding-top: 16px; height: 102px; }
.dev a + a { border-left: 2px solid #2f69d8; }
.dev span { line-height: 32px; margin-bottom: 2px; }
.dev svg { margin-left: 8px; }
.dev a + a svg { margin-top: 2px; }
.tool { width: 130px; height: 106px; border-left: 2px solid #2d66d3; display: flex; flex-direction: column; align-items: center; font-size: 24px; line-height: 34px; font-weight: 500; padding-top: 13px; }
.tool svg { height: 42px; margin-bottom: 6px; }

.page-head { height: 83px; flex: none; background: #fff; border-bottom: 1px solid #c8ccd0; display: flex; align-items: center; padding: 0 16px 0 43px; color: #000; }
.page-head h1 { flex: 1; margin-left: 76px; font-size: 32px; font-weight: 700; letter-spacing: -.5px; padding-bottom: 6px; }
.page-head a { display: flex; align-items: center; gap: 20px; color: #3a7af3; font-size: 30px; font-weight: 500; padding-bottom: 6px; }
.page-head a svg { margin-top: 6px; }

.content { flex: 1; min-height: 0; background: #ebf0f5; padding: 19px 20px 20px; display: flex; flex-direction: column; }
.status { height: 144px; flex: none; border-radius: 10px; background: #fff; box-shadow: 0 2px 2px rgba(0,0,0,.25), 0 0 2px rgba(0,0,0,.1); display: flex; align-items: center; padding: 0 40px; }
.play { width: 104px; height: 104px; border-radius: 50%; background: #fff; box-shadow: 0 2px 24px rgba(0,0,0,.16); display: flex; align-items: center; justify-content: center; flex: none; }
.play i { width: 60px; height: 60px; border-radius: 50%; background: #45a545; display: flex; align-items: center; justify-content: center; padding-left: 3px; }
.state { margin-left: 40px; flex: 1; padding-top: 24px; align-self: flex-start; }
.state h3 { font-size: 40px; font-weight: 400; line-height: 60px; }
.bar { width: 160px; height: 16px; border-radius: 8px; background: #a8c6f8; margin-top: 13px; }
.monitor { margin: 0 40px 2px 0; }
.times { width: 173px; font-size: 29.500px; line-height: 46px; color: #969696; padding-bottom: 4px; }
.times p { white-space: pre; letter-spacing: -.2px; }
.times span { letter-spacing: 2px; }

.tabs { align-self: center; width: 674px; height: 64px; flex: none; margin-top: 20px; border-radius: 18px; background: #dcdfe4; display: flex; align-items: center; font-size: 26px; font-weight: 500; }
.tabs a { display: flex; align-items: center; height: 56px; border-radius: 14px; padding-bottom: 5px; }
.tabs a svg { margin-top: 5px; }
.t1 { width: 170px; padding-left: 39px; gap: 10px; }
.t2 { width: 168px; padding-left: 39px; gap: 14px; background: #fff; box-shadow: 0 3px 10px rgba(0,0,0,.2); }
.t3 { width: 164px; padding-left: 34px; gap: 13px; }
.tabs hr { width: 2px; height: 36px; background: #bfc2c7; }
.t4 { padding-left: 24px; gap: 14px; }

.table { margin-top: 22px; font-size: 30px; }
.row { display: grid; grid-template-columns: 109px 148px 116px 360px 932px 407px; height: 80px; background: #fff; border-bottom: 2px solid #ebf0f5; }
.row > div { display: flex; align-items: center; padding-left: 19px; border-right: 2px solid #ebf0f5; }
.row > div:nth-child(2) { padding-left: 23px; }
.row > div:last-child { border-right: 0; }
.row > .c-check { padding-left: 48px; }
.row > .c-x { padding-left: 35px; }
.row > .word { letter-spacing: -.6px; }
.row > .link { padding-left: 35px; color: #3a7af3; font-weight: 500; letter-spacing: -.3px; }
.row > .date { font-size: 29px; letter-spacing: -1.35px; font-variant-numeric: tabular-nums; }
.head { height: 82px; background: none; border: 0; font-weight: 700; color: #000; font-size: 28px; }
.head > div { border-color: transparent; padding-bottom: 5px; }
.head > .c-check { padding-bottom: 0; }
.row:last-child { border-bottom: 1px solid #d6dadd; }
.check { width: 36px; height: 36px; border: 4px solid #413f4a; border-radius: 4px; }

.pager { height: 76px; flex: none; margin-top: auto; background: #fff; border-top: 2px solid #dbdee0; display: flex; align-items: center; padding: 0 24px 2px 46px; font-size: 30px; }
.pager a { display: flex; align-items: center; color: #3a7af3; font-weight: 500; padding-bottom: 4px; }
.pager a svg { margin-top: 4px; }
.del { gap: 17px; flex: 1; }
.reload { gap: 16px; }
.total { margin-left: 36px; padding-bottom: 4px; letter-spacing: -.1px; }
.first { margin-left: 43px; }
.prev { margin-left: 47px; }
.page { margin: 0 39px; width: 58px; display: flex; justify-content: center; padding-bottom: 2px; }
.last { margin-left: 47px; }
```
